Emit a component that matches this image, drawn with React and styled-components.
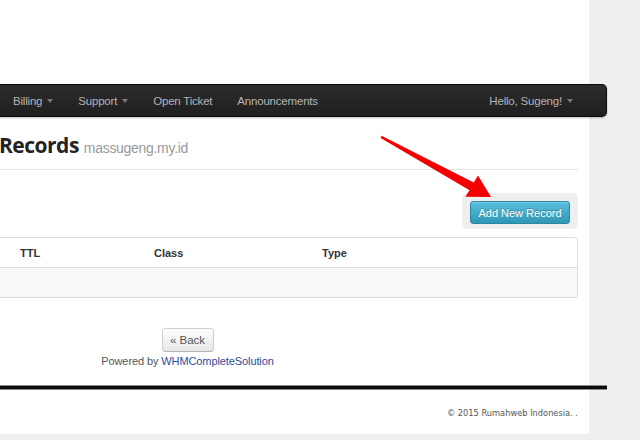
import React from 'react';
import styled, {createGlobalStyle} from 'styled-components';

const Global = createGlobalStyle`
  html, body {
    margin: 0;
    padding: 0;
    background: #efefef;
    font-family: "Liberation Sans", Arial, sans-serif;
  }
`;

const Page = styled.div`
  position: relative;
  width: 589px;
  height: 434px;
  background: #fff;
  padding-top: 84px;
  box-sizing: border-box;
`;

const Navbar = styled.div`
  width: 607px;
  height: 33px;
  box-sizing: border-box;
  display: flex;
  align-items: center;
  justify-content: space-between;
  padding: 0 33px 0 13px;
  background: linear-gradient(#2c2c2c, #1f1f1f);
  border: 1px solid #0a0a0a;
  border-left: none;
  border-radius: 0 5px 5px 0;
  box-shadow: 0 1px 2px rgba(0, 0, 0, 0.25);
`;

const NavGroup = styled.div`
  display: flex;
  align-items: center;
  gap: 25px;
`;

const NavLink = styled.span`
  display: flex;
  align-items: center;
  color: #b4b4b4;
  font-size: 11.5px;
  letter-spacing: -0.2px;
`;

const Caret = styled.span`
  display: inline-block;
  margin-left: 5px;
  margin-top: 1px;
  border-left: 3.5px solid transparent;
  border-right: 3.5px solid transparent;
  border-top: 4px solid #777;
`;

const Container = styled.div`
  width: 578px;
`;

const Header = styled.div`
  display: flex;
  align-items: baseline;
  gap: 5px;
  padding: 16px 0 11px;
  border-bottom: 1px solid #e6e6e6;
`;

const Title = styled.h1`
  margin: 0 0 0 -1px;
  font-family: "Open Sans", sans-serif;
  font-weight: 700;
  font-size: 21px;
  line-height: 25px;
  letter-spacing: -0.5px;
  color: #222;
`;

const Domain = styled.small`
  font-size: 14px;
  color: #999;
  letter-spacing: -0.3px;
`;

const Toolbar = styled.div`
  display: flex;
  justify-content: flex-end;
  margin-top: 23px;
`;

const Well = styled.div`
  padding: 8px 8px 5px;
  background: #efefef;
  border-radius: 5px;
`;

const InfoButton = styled.div`
  width: 100px;
  height: 23px;
  box-sizing: border-box;
  display: flex;
  align-items: center;
  justify-content: center;
  color: #fff;
  font-size: 11px;
  text-shadow: 0 -1px 0 rgba(0, 0, 0, 0.25);
  background: linear-gradient(#5bc0de, #2f96b4);
  border: 1px solid #2a87a3;
  border-radius: 3px;
  box-shadow: inset 0 1px 0 rgba(255, 255, 255, 0.2);
`;

const Table = styled.div`
  margin-top: 8px;
  border: 1px solid #dddddd;
  border-left: none;
  border-radius: 0 4px 4px 0;
  overflow: hidden;
`;

const Row = styled.div`
  display: flex;
  align-items: center;
  height: ${(p) => p.$h}px;
  padding-left: 20px;
  background: ${(p) => (p.$alt ? '#f9f9f9' : '#fff')};
  border-top: ${(p) => (p.$alt ? '1px solid #dddddd' : 'none')};
`;

const HeadCell = styled.div`
  width: ${(p) => p.$w}px;
  font-size: 11px;
  font-weight: 700;
  color: #333;
`;

const Bottom = styled.div`
  width: 375px;
  margin-top: 30px;
  display: flex;
  flex-direction: column;
  align-items: center;
  gap: 3px;
`;

const BackButton = styled.div`
  width: 52px;
  height: 24px;
  box-sizing: border-box;
  display: flex;
  align-items: center;
  justify-content: center;
  font-size: 11.5px;
  color: #555;
  background: linear-gradient(#ffffff, #e6e6e6);
  border: 1px solid #cfcfcf;
  border-bottom-color: #b3b3b3;
  border-radius: 4px;
`;

const Powered = styled.div`
  font-size: 11px;
  color: #555;
  letter-spacing: -0.1px;

  a {
    color: #2b4c9c;
    text-decoration: none;
  }
`;

const ThickRule = styled.div`
  width: 607px;
  height: 3px;
  margin-top: 18px;
  background: #0d0d0d;
  border-top: 1px solid #888;
  border-bottom: 1px solid #888;
`;

const Copyright = styled.div`
  width: 578px;
  margin-top: 17px;
  text-align: right;
  font-family: "DejaVu Sans Condensed", "DejaVu Sans", sans-serif;
  font-size: 9.2px;
  color: #555;
`;

const Overlay = styled.svg`
  position: absolute;
  left: 0;
  top: 0;
  pointer-events: none;
`;

export default function App() {
  return (
    <>
      <Global />
      <Page>
        <Navbar>
          <NavGroup>
            <NavLink>Billing<Caret /></NavLink>
            <NavLink>Support<Caret /></NavLink>
            <NavLink>Open Ticket</NavLink>
            <NavLink>Announcements</NavLink>
          </NavGroup>
          <NavLink>Hello, Sugeng!<Caret /></NavLink>
        </Navbar>
        <Container>
          <Header>
            <Title>Records</Title>
            <Domain>massugeng.my.id</Domain>
          </Header>
          <Toolbar>
            <Well>
              <InfoButton>Add New Record</InfoButton>
            </Well>
          </Toolbar>
          <Table>
            <Row $h={29}>
              <HeadCell $w={134}>TTL</HeadCell>
              <HeadCell $w={168}>Class</HeadCell>
              <HeadCell $w={100}>Type</HeadCell>
            </Row>
            <Row $h={29} $alt />
          </Table>
        </Container>
        <Bottom>
          <BackButton>« Back</BackButton>
          <Powered>
            Powered by <a href="#">WHMCompleteSolution</a>
          </Powered>
        </Bottom>
        <ThickRule />
        <Copyright>© 2015 Rumahweb Indonesia. .</Copyright>
        <Overlay width="640" height="440" viewBox="0 0 640 440">
          <polygon
            points="381.6,135.8 473.8,182.4 478,175.6 491,197 465.4,196.8 469.6,190.2 380.6,138"
            fill="#f40000"
          />
        </Overlay>
      </Page>
    </>
  );
}
